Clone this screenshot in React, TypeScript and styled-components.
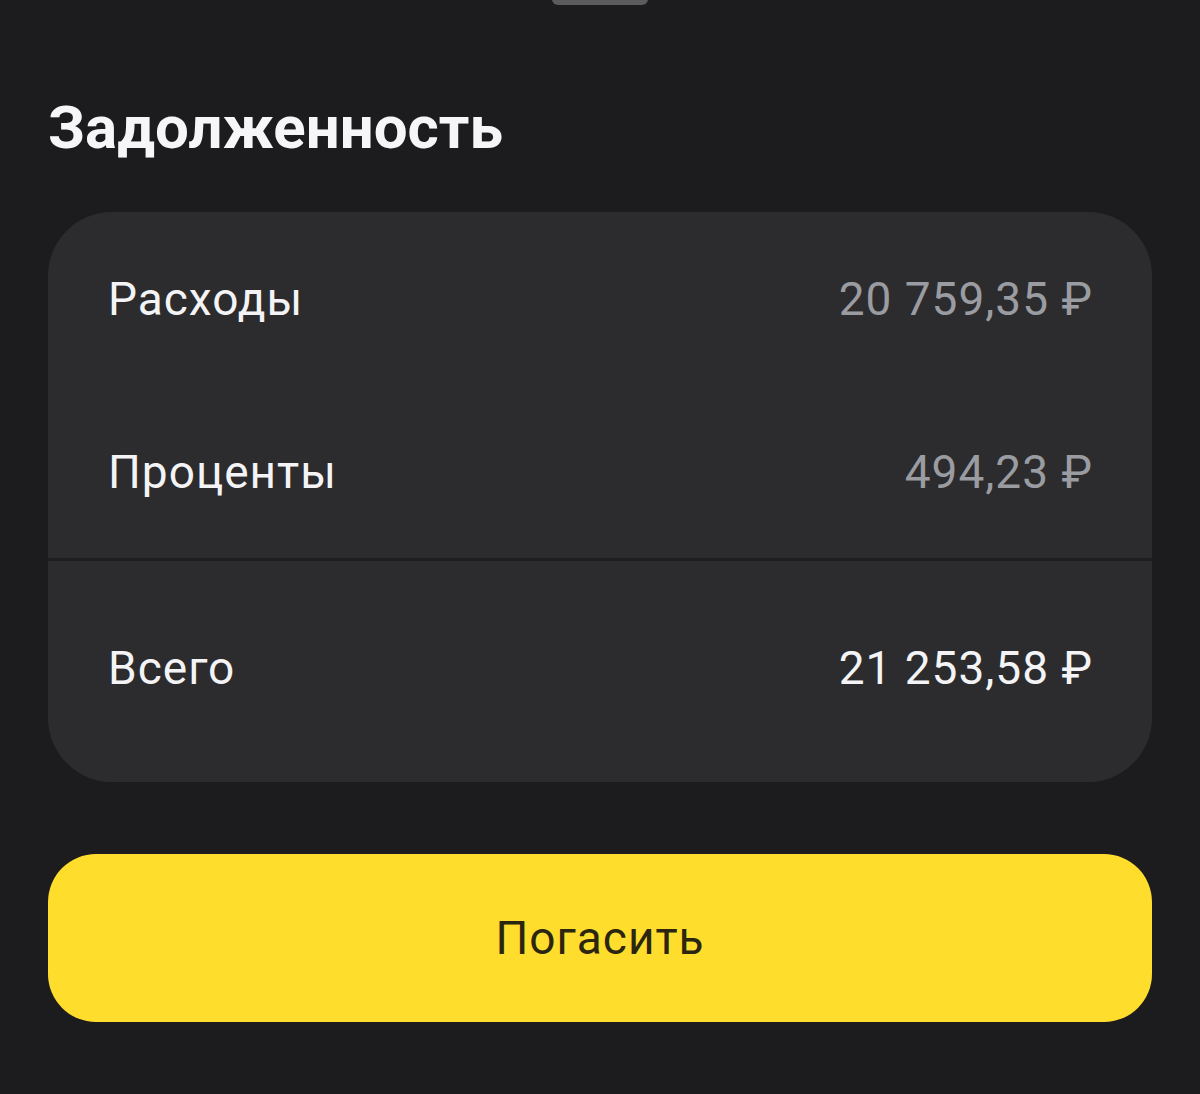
import React from "react";
import styled, { createGlobalStyle } from "styled-components";

const Global = createGlobalStyle`
  html, body { margin: 0; padding: 0; background: #1c1c1e; }
  body { font-family: Roboto, "Noto Sans", sans-serif; -webkit-font-smoothing: antialiased; }
`;

const Page = styled.div`
  width: 1200px;
  height: 1094px;
  background: #1c1c1e;
  box-sizing: border-box;
  padding: 0 48px;
  display: flex;
  flex-direction: column;
  position: relative;
`;

const Handle = styled.div`
  position: absolute;
  top: -8px;
  left: 552px;
  width: 96px;
  height: 13px;
  border-radius: 6px;
  background: #5b5b5e;
`;

const Title = styled.h1`
  margin: 88px 0 0;
  font-family: Roboto, sans-serif;
  font-weight: 700;
  font-size: 60px;
  line-height: 80px;
  color: #f6f6f8;
  letter-spacing: 0;
`;

const Card = styled.div`
  margin-top: 44px;
  background: #2c2c2e;
  border-radius: 64px;
  overflow: hidden;
  display: flex;
  flex-direction: column;
`;

const Section = styled.div<{ $pt: number; $pb: number }>`
  padding: ${(p) => p.$pt}px 0 ${(p) => p.$pb}px;
  display: flex;
  flex-direction: column;
`;

const Divider = styled.div`
  height: 3px;
  background: #1f1f21;
`;

const Row = styled.div`
  height: 173px;
  padding: 0 60px 0 60px;
  display: flex;
  align-items: center;
  justify-content: space-between;
  font-size: 46px;
  letter-spacing: 1px;
  font-weight: 400;
`;

const Label = styled.span`
  color: #f4f4f6;
`;

const Value = styled.span<{ $strong?: boolean }>`
  color: ${(p) => (p.$strong ? "#f4f4f6" : "#9a9ca1")};
  margin-right: -1px;
`;

const PayButton = styled.button`
  margin-top: 72px;
  height: 168px;
  border: none;
  border-radius: 48px;
  background: #fedd2c;
  color: #2b2610;
  font-family: Roboto, sans-serif;
  font-size: 46px;
  letter-spacing: 1px;
  font-weight: 400;
  cursor: pointer;
`;

const rows = [
  { label: "Расходы", value: "20 759,35 ₽" },
  { label: "Проценты", value: "494,23 ₽" },
];

export default function App() {
  return (
    <>
      <Global />
      <Page>
        <Handle />
        <Title>Задолженность</Title>
        <Card>
          <Section $pt={0} $pb={0}>
            {rows.map((r) => (
              <Row key={r.label}>
                <Label>{r.label}</Label>
                <Value>{r.value}</Value>
              </Row>
            ))}
          </Section>
          <Divider />
          <Section $pt={20} $pb={28}>
            <Row>
              <Label>Всего</Label>
              <Value $strong>21 253,58 ₽</Value>
            </Row>
          </Section>
        </Card>
        <PayButton>Погасить</PayButton>
      </Page>
    </>
  );
}
